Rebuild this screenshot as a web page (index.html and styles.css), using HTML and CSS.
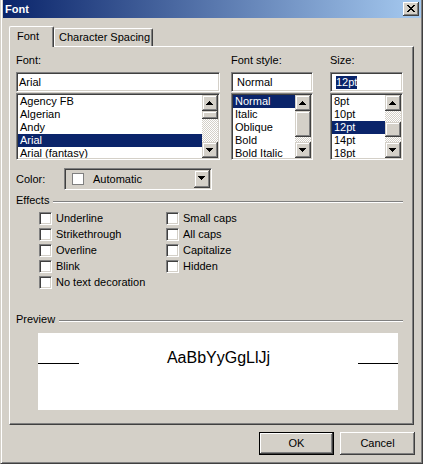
FILE: index.html
```html
<!DOCTYPE html>
<html>
<head>
<meta charset="utf-8">
<title>Font</title>
<link rel="stylesheet" href="styles.css">
</head>
<body>
<div class="window">
  <div class="titlebar">
    <span class="title">Font</span>
    <span class="close"><svg width="8" height="7" viewBox="0 0 8 7"><path d="M0 0h2v1H0z M6 0h2v1H6z M1 1h2v1H1z M5 1h2v1H5z M2 2h4v1H2z M3 3h2v1H3z M2 4h4v1H2z M1 5h2v1H1z M5 5h2v1H5z M0 6h2v1H0z M6 6h2v1H6z" fill="#000"/></svg></span>
  </div>
  <div class="client">
    <div class="tabs">
      <div class="tab tab-active">Font</div>
      <div class="tab">Character Spacing</div>
    </div>
    <div class="panel">
      <div class="pickers">
        <div class="picker picker-font">
          <div class="lbl">Font:</div>
          <div class="field field-font">Arial</div>
          <div class="list">
            <div class="items">
              <div class="item">Agency FB</div>
              <div class="item">Algerian</div>
              <div class="item">Andy</div>
              <div class="item sel">Arial</div>
              <div class="item">Arial (fantasy)</div>
            </div>
            <div class="vscroll">
              <div class="sbtn"><svg width="7" height="4" viewBox="0 0 7 4"><path d="M3 0h1v1H3z M2 1h3v1H2z M1 2h5v1H1z M0 3h7v1H0z" fill="#000"/></svg></div>
              <div class="thumb" style="margin-top:0;height:8px"></div>
              <div class="sbtn sbtn-down"><svg width="7" height="4" viewBox="0 0 7 4"><path d="M0 0h7v1H0z M1 1h5v1H1z M2 2h3v1H2z M3 3h1v1H3z" fill="#000"/></svg></div>
            </div>
          </div>
        </div>
        <div class="picker picker-style">
          <div class="lbl">Font style:</div>
          <div class="field">Normal</div>
          <div class="list">
            <div class="items">
              <div class="item sel">Normal</div>
              <div class="item">Italic</div>
              <div class="item">Oblique</div>
              <div class="item">Bold</div>
              <div class="item">Bold Italic</div>
            </div>
            <div class="vscroll">
              <div class="sbtn"><svg width="7" height="4" viewBox="0 0 7 4"><path d="M3 0h1v1H3z M2 1h3v1H2z M1 2h5v1H1z M0 3h7v1H0z" fill="#000"/></svg></div>
              <div class="thumb" style="margin-top:0;height:26px"></div>
              <div class="sbtn sbtn-down"><svg width="7" height="4" viewBox="0 0 7 4"><path d="M0 0h7v1H0z M1 1h5v1H1z M2 2h3v1H2z M3 3h1v1H3z" fill="#000"/></svg></div>
            </div>
          </div>
        </div>
        <div class="picker picker-size">
          <div class="lbl">Size:</div>
          <div class="field"><span class="seltext">12pt</span></div>
          <div class="list">
            <div class="items">
              <div class="item">8pt</div>
              <div class="item">10pt</div>
              <div class="item sel">12pt</div>
              <div class="item">14pt</div>
              <div class="item">18pt</div>
            </div>
            <div class="vscroll">
              <div class="sbtn"><svg width="7" height="4" viewBox="0 0 7 4"><path d="M3 0h1v1H3z M2 1h3v1H2z M1 2h5v1H1z M0 3h7v1H0z" fill="#000"/></svg></div>
              <div class="thumb" style="margin-top:11px;height:15px"></div>
              <div class="sbtn sbtn-down"><svg width="7" height="4" viewBox="0 0 7 4"><path d="M0 0h7v1H0z M1 1h5v1H1z M2 2h3v1H2z M3 3h1v1H3z" fill="#000"/></svg></div>
            </div>
          </div>
        </div>
      </div>

      <div class="color-row">
        <div class="color-lbl">Color:</div>
        <div class="combo">
          <span class="swatch"></span>
          <span class="combo-text">Automatic</span>
          <span class="combo-btn"><svg width="7" height="4" viewBox="0 0 7 4"><path d="M0 0h7v1H0z M1 1h5v1H1z M2 2h3v1H2z M3 3h1v1H3z" fill="#000"/></svg></span>
        </div>
      </div>

      <div class="group"><span>Effects</span><span class="group-rule"></span></div>
      <div class="effects">
        <label class="check"><span class="box"></span><span class="check-text">Underline</span></label>
        <label class="check"><span class="box"></span><span class="check-text">Small caps</span></label>
        <label class="check"><span class="box"></span><span class="check-text">Strikethrough</span></label>
        <label class="check"><span class="box"></span><span class="check-text">All caps</span></label>
        <label class="check"><span class="box"></span><span class="check-text">Overline</span></label>
        <label class="check"><span class="box"></span><span class="check-text">Capitalize</span></label>
        <label class="check"><span class="box"></span><span class="check-text">Blink</span></label>
        <label class="check"><span class="box"></span><span class="check-text">Hidden</span></label>
        <label class="check"><span class="box"></span><span class="check-text">No text decoration</span></label>
      </div>

      <div class="group group-preview"><span>Preview</span><span class="group-rule"></span></div>
      <div class="preview">
        <span class="pline pline-left"></span>
        <span class="ptext">AaBbYyGgLlJj</span>
        <span class="pline"></span>
      </div>
    </div>
    <div class="buttons">
      <div class="btn btn-default">OK</div>
      <div class="btn">Cancel</div>
    </div>
  </div>
</div>
</body>
</html>
```
FILE: styles.css
```css
* { box-sizing: border-box; margin: 0; padding: 0; }
html, body { width: 423px; height: 464px; overflow: hidden; background: #d4d0c8; }
body { font: 11px/13px "Liberation Sans", Arial, sans-serif; color: #000; }

.window {
  width: 423px; height: 464px;
  display: flex; flex-direction: column;
  background: #d4d0c8;
  border-left: 1px solid #d4d0c8;
  border-right: 1px solid #404040;
  border-bottom: 1px solid #404040;
  box-shadow: inset 1px 0 #fff, inset -1px -1px #808080;
  padding: 0 1px 1px 2px;
}

.titlebar {
  height: 18px; flex: none;
  display: flex; align-items: center;
  padding-left: 2px;
  background: linear-gradient(to right, #0a246a, #a6caf0);
  color: #fff; font-weight: bold;
}
.close {
  margin-left: auto; margin-right: 2px;
  width: 16px; height: 14px;
  background: #d4d0c8;
  box-shadow: inset -1px -1px #404040, inset 1px 1px #fff, inset -2px -2px #808080;
  padding: 3px 0 0 4px;
}
.close svg, .sbtn svg, .combo-btn svg { display: block; }

.client { flex: 1; padding: 8px 6px 0 6px; display: flex; flex-direction: column; }

.tabs { display: flex; align-items: flex-end; height: 20px; position: relative; z-index: 1; flex: none; }
.tab {
  width: 99px; height: 18px;
  padding: 2px 0 0 4px;
  background: #d4d0c8;
  border-top: 1px solid #fff; border-left: 1px solid #fff; border-right: 1px solid #404040;
  box-shadow: inset -1px 0 #808080;
  border-top-left-radius: 2px; border-top-right-radius: 2px;
  white-space: nowrap;
}
.tab-active { width: 45px; height: 21px; margin-bottom: -1px; padding: 3px 0 0 7px; }

.panel {
  width: 405px; height: 379px; flex: none;
  border-top: 1px solid #fff; border-left: 1px solid #fff;
  border-right: 1px solid #404040; border-bottom: 1px solid #404040;
  box-shadow: inset -1px -1px #808080;
  padding: 7px 10px 0 6px;
}

.pickers { display: flex; }
.picker-font { width: 204px; }
.picker-style { width: 82px; margin-left: 11px; }
.picker-size { width: 73px; margin-left: 17px; }

.sunken {
}
.field, .list, .box, .combo {
  border: 1px solid; border-color: #808080 #fff #fff #808080;
  box-shadow: inset 1px 1px #404040, inset -1px -1px #d4d0c8;
}
.field {
  height: 20px; margin-top: 5px;
  background: #fff;
  display: flex; align-items: center;
  padding-left: 5px; white-space: nowrap;
}
.field-font { padding-left: 2px; }
.seltext { background: #0a246a; color: #fff; }

.list {
  height: 67px; margin-top: 1px;
  background: #fff;
  display: flex; padding: 1px;
}
.items { flex: 1; min-width: 0; overflow: hidden; }
.item { height: 13px; padding-left: 2px; white-space: nowrap; }
.item.sel { background: #0a246a; color: #fff; }

.vscroll {
  width: 16px; flex: none;
  display: flex; flex-direction: column;
  background: repeating-conic-gradient(#d4d0c8 0 25%, #fff 0 50%) 0 0 / 2px 2px;
}
.sbtn, .thumb, .combo-btn, .btn {
  background: #d4d0c8;
  box-shadow: inset -1px -1px #404040, inset 1px 1px #d4d0c8, inset -2px -2px #808080, inset 2px 2px #fff;
}
.sbtn { height: 16px; flex: none; padding: 6px 0 0 4px; }
.sbtn-down { margin-top: auto; padding-top: 6px; }
.thumb { flex: none; }

.color-row { display: flex; align-items: center; margin-top: 8px; }
.color-lbl { width: 48px; }
.combo {
  width: 148px; height: 22px;
  background: #d4d0c8;
  display: flex; align-items: center;
  padding: 1px;
}
.swatch { width: 12px; height: 12px; background: #fff; border: 1px solid #808080; margin-left: 6px; }
.combo-text { margin-left: 9px; }
.combo-btn { margin-left: auto; width: 16px; align-self: stretch; padding: 6px 0 0 4px; }

.group { display: flex; margin-top: 4px; }
.group-preview { margin-top: 22px; }
.group-rule {
  flex: 1; height: 2px;
  margin: 7px 0 0 4px;
  border-top: 1px solid #808080; border-bottom: 1px solid #fff;
}

.effects {
  display: grid;
  grid-template-columns: 127px auto;
  grid-auto-rows: 16px;
  margin: 4px 0 0 23px;
}
.check { display: flex; align-items: flex-start; }
.box { width: 13px; height: 13px; margin-top: 1px; background: #fff; flex: none; }
.check-text { margin: 1px 0 0 4px; white-space: nowrap; }

.preview {
  width: 360px; height: 77px;
  margin: 7px 0 0 22px;
  background: #fff;
  display: flex; justify-content: space-between; align-items: flex-start;
  padding-top: 16px;
}
.pline { width: 40px; height: 1px; background: #000; margin-top: 14px; }
.pline-left { width: 41px; }
.ptext { font-size: 16px; line-height: 18px; }

.buttons { display: flex; justify-content: flex-end; gap: 6px; margin-top: 7px; }
.btn {
  width: 75px; height: 23px;
  display: flex; align-items: center; justify-content: center;
  box-shadow: inset -1px -1px #404040, inset 1px 1px #fff, inset -2px -2px #808080;
}
.btn-default { border: 1px solid #000; }
```
